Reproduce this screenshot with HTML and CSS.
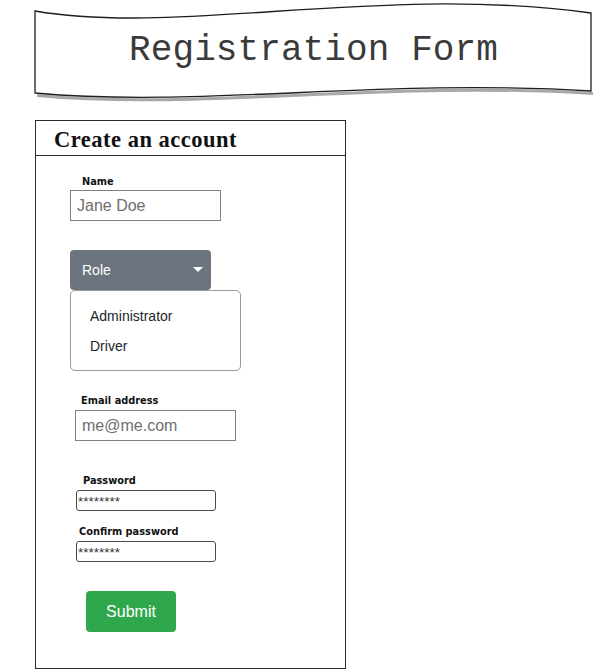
FILE: index.html
```html
<!DOCTYPE html>
<html lang="en">
<head>
<meta charset="utf-8">
<title>Registration Form</title>
<link rel="stylesheet" href="styles.css">
</head>
<body>
<div class="page">
  <header class="banner">
    <svg class="banner-shape" width="560" height="104" viewBox="0 0 560 104" aria-hidden="true">
      <path class="banner-shadow" d="M556,91 C345,78 165,108 0,93"/>
      <path class="banner-fill" d="M0,11 C145,36 345,-16 556,13 L556,91 C345,78 165,108 0,93 Z"/>
    </svg>
    <h1 class="banner-title">Registration Form</h1>
  </header>

  <section class="card">
    <div class="card-head">Create an account</div>
    <div class="card-body">
      <div class="label label-name">Name</div>
      <div class="text-input input-name">Jane Doe</div>

      <div class="role-btn">
        <span>Role</span>
        <span class="caret"></span>
      </div>
      <ul class="role-menu">
        <li>Administrator</li>
        <li>Driver</li>
      </ul>

      <div class="label label-email">Email address</div>
      <div class="text-input input-email">me@me.com</div>

      <div class="label label-pw">Password</div>
      <div class="pw-input pw-first">********</div>

      <div class="label label-confirm">Confirm password</div>
      <div class="pw-input pw-confirm">********</div>

      <div class="submit-btn">Submit</div>
    </div>
  </section>
</div>
</body>
</html>
```

FILE: styles.css
```css
* { box-sizing: border-box; }

html, body {
  margin: 0;
  padding: 0;
  background: #ffffff;
}

body {
  font-family: "Liberation Sans", Arial, sans-serif;
  color: #222;
}

.page {
  width: 593px;
  height: 671px;
  overflow: hidden;
}

/* Banner */
.banner {
  position: relative;
  margin-left: 35px;
  width: 557px;
  height: 100px;
  display: flex;
  align-items: center;
  justify-content: center;
}

.banner-shape {
  position: absolute;
  left: 0;
  top: 0;
  overflow: visible;
}

.banner-fill {
  fill: #ffffff;
  stroke: #1e1e1e;
  stroke-width: 1.3;
}

.banner-shadow {
  fill: none;
  stroke: #a8a8a8;
  stroke-width: 3;
  transform: translate(2px, 2.5px);
}

.banner-title {
  position: relative;
  margin: 0;
  padding-top: 1px;
  font-family: "Liberation Mono", "Courier New", monospace;
  font-weight: normal;
  font-size: 36px;
  color: #3a3a3a;
  letter-spacing: 0.1px;
}

/* Card */
.card {
  margin-top: 20px;
  margin-left: 35px;
  width: 311px;
  height: 549px;
  border: 1px solid #2b2b2b;
  display: flex;
  flex-direction: column;
}

.card-head {
  height: 35px;
  border-bottom: 1px solid #2b2b2b;
  padding-left: 18px;
  padding-top: 3px;
  display: flex;
  align-items: center;
  font-family: "Liberation Serif", "Times New Roman", serif;
  font-weight: bold;
  font-size: 22.5px;
  letter-spacing: 0.5px;
  color: #111;
}

.card-body {
  display: flex;
  flex-direction: column;
  align-items: flex-start;
}

.label {
  font-family: "DejaVu Sans", Verdana, sans-serif;
  font-weight: bold;
  font-size: 9.8px;
  line-height: 12px;
  color: #111;
}

.label-name { margin-top: 20px; margin-left: 46px; }
.label-email { margin-top: 24px; margin-left: 45px; }
.label-pw { margin-top: 34px; margin-left: 47px; }
.label-confirm { margin-top: 15px; margin-left: 43px; }

.text-input {
  margin-top: 2px;
  height: 31px;
  border: 1px solid #808080;
  padding-left: 6px;
  display: flex;
  align-items: center;
  font-size: 16px;
  color: #6e6e6e;
}

.input-name { width: 151px; margin-left: 34px; }
.input-email { width: 161px; margin-left: 39px; margin-top: 3px; }

/* Role dropdown */
.role-btn {
  margin-top: 29px;
  margin-left: 34px;
  width: 141px;
  height: 40px;
  background: #6c757d;
  border-radius: 4px;
  padding: 0 8px 0 12px;
  display: flex;
  align-items: center;
  justify-content: space-between;
  color: #ffffff;
  font-size: 14px;
}

.caret {
  width: 0;
  height: 0;
  border-left: 5px solid transparent;
  border-right: 5px solid transparent;
  border-top: 5px solid #ffffff;
  margin-top: -1px;
}

.role-menu {
  list-style: none;
  margin: 0 0 0 34px;
  width: 171px;
  height: 81px;
  border: 1px solid #9a9a9a;
  border-radius: 5px;
  padding: 10px 0 0 19px;
  font-size: 14px;
  color: #212529;
}

.role-menu li {
  line-height: 30px;
}

/* Password fields */
.pw-input {
  margin-top: 3px;
  margin-left: 40px;
  width: 140px;
  height: 21px;
  border: 1px solid #4a4a4a;
  border-radius: 3px;
  padding-left: 1px;
  font-size: 13.5px;
  line-height: 21px;
  color: #333;
}

/* Submit */
.submit-btn {
  margin-top: 29px;
  margin-left: 50px;
  width: 90px;
  height: 41px;
  background: #2fa74c;
  border-radius: 4px;
  color: #ffffff;
  font-size: 16px;
  display: flex;
  align-items: center;
  justify-content: center;
}
```
